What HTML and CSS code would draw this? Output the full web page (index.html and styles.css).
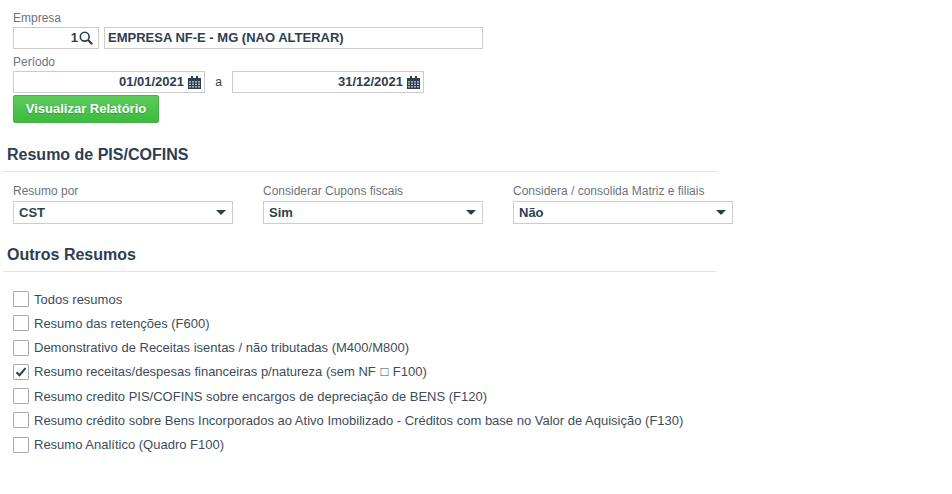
FILE: index.html
```html
<!DOCTYPE html>
<html lang="pt-BR">
<head>
<meta charset="utf-8">
<title>Resumo de PIS/COFINS</title>
<link rel="stylesheet" href="styles.css">
</head>
<body>
<main class="page">
  <div class="filters">
    <label class="label">Empresa</label>
    <div class="row">
      <div class="field code"><span>1</span>
        <svg class="icon search" viewBox="0 0 14 14"><circle cx="5.7" cy="5.7" r="4.4" fill="none" stroke="#2d3e50" stroke-width="1.6"/><path d="M8.8 8.8l4.4 4.4" stroke="#2d3e50" stroke-width="2.2"/></svg>
      </div>
      <div class="field name">EMPRESA NF-E - MG (NAO ALTERAR)</div>
    </div>
    <label class="label period">Período</label>
    <div class="row">
      <div class="field date"><span>01/01/2021</span>
        <svg class="icon" viewBox="0 0 13 13"><path d="M0 2h13v11H0z" fill="#2d3e50"/><path d="M3 0h2v3H3zM8 0h2v3H8z" fill="#2d3e50"/><path d="M1 5h2v1.5H1zM4 5h2v1.5H4zM7 5h2v1.5H7zM10 5h2v1.5h-2zM1 7.5h2V9H1zM4 7.5h2V9H4zM7 7.5h2V9H7zM10 7.5h2V9h-2zM1 10h2v1.5H1zM4 10h2v1.5H4zM7 10h2v1.5H7zM10 10h2v1.5h-2z" fill="#fff" opacity=".6"/></svg>
      </div>
      <span class="sep">a</span>
      <div class="field date"><span>31/12/2021</span>
        <svg class="icon" viewBox="0 0 13 13"><path d="M0 2h13v11H0z" fill="#2d3e50"/><path d="M3 0h2v3H3zM8 0h2v3H8z" fill="#2d3e50"/><path d="M1 5h2v1.5H1zM4 5h2v1.5H4zM7 5h2v1.5H7zM10 5h2v1.5h-2zM1 7.5h2V9H1zM4 7.5h2V9H4zM7 7.5h2V9H7zM10 7.5h2V9h-2zM1 10h2v1.5H1zM4 10h2v1.5H4zM7 10h2v1.5H7zM10 10h2v1.5h-2z" fill="#fff" opacity=".6"/></svg>
      </div>
    </div>
    <button class="btn" type="button">Visualizar Relatório</button>
  </div>

  <h2 class="title first">Resumo de PIS/COFINS</h2>
  <div class="selects">
    <div class="sel-col">
      <label class="label">Resumo por</label>
      <div class="select"><span>CST</span><i class="caret"></i></div>
    </div>
    <div class="sel-col">
      <label class="label">Considerar Cupons fiscais</label>
      <div class="select"><span>Sim</span><i class="caret"></i></div>
    </div>
    <div class="sel-col">
      <label class="label">Considera / consolida Matriz e filiais</label>
      <div class="select"><span>Não</span><i class="caret"></i></div>
    </div>
  </div>

  <h2 class="title second">Outros Resumos</h2>
  <ul class="checks">
    <li><i class="box"></i><span>Todos resumos</span></li>
    <li><i class="box"></i><span>Resumo das retenções (F600)</span></li>
    <li><i class="box"></i><span>Demonstrativo de Receitas isentas / não tributadas (M400/M800)</span></li>
    <li><i class="box"><svg viewBox="0 0 14 14"><path d="M2.5 7.2l3 3 6-7" fill="none" stroke="#2d3e50" stroke-width="2"/></svg></i><span>Resumo receitas/despesas financeiras p/natureza (sem NF <span class="tofu">□</span> F100)</span></li>
    <li><i class="box"></i><span>Resumo credito PIS/COFINS sobre encargos de depreciação de BENS (F120)</span></li>
    <li><i class="box"></i><span>Resumo crédito sobre Bens Incorporados ao Ativo Imobilizado - Créditos com base no Valor de Aquisição (F130)</span></li>
    <li><i class="box"></i><span>Resumo Analítico (Quadro F100)</span></li>
  </ul>
</main>
</body>
</html>
```
FILE: styles.css
```css
* { box-sizing: border-box; }
html, body { margin: 0; padding: 0; background: #fff; }
body {
  width: 952px;
  height: 494px;
  overflow: hidden;
  font-family: "Liberation Sans", Arial, sans-serif;
  font-size: 12px;
  color: #2d3e50;
}
.page { padding: 11px 0 0 0; }
.filters { padding-left: 13px; }
.label {
  display: block;
  height: 16px;
  line-height: 14px;
  font-size: 12px;
  color: #6b7480;
}
.period { margin-top: 6px; }
.row { display: flex; align-items: center; height: 22px; }
.field {
  height: 22px;
  border: 1px solid #ccc;
  font-size: 13px;
  line-height: 20px;
  display: flex;
  align-items: center;
  background: #fff;
}
.code { width: 86px; justify-content: flex-end; padding-right: 5px; gap: 1px; font-weight: 700; margin-right: 5px; }
.name { width: 379px; padding-left: 3px; font-weight: 700; }
.date { width: 192px; justify-content: flex-end; padding-right: 3px; gap: 4px; font-weight: 700; }
.icon { width: 13px; height: 13px; flex: none; }
.search { width: 14px; height: 14px; }
.sep { width: 27px; text-align: center; color: #2d3e50; }
.btn {
  display: block;
  margin-top: 2px;
  width: 146px;
  height: 28px;
  padding: 0 0 2px;
  border: 1px solid #3fb63f;
  border-radius: 2px;
  background: linear-gradient(#5ccb5c, #3dbb3d);
  color: #fff;
  font: 700 13px "Liberation Sans", Arial, sans-serif;
  text-shadow: 0 1px 1px rgba(0, 0, 0, .2);
}
.title {
  margin: 0 235px 0 3px;
  padding: 0 0 7px 4px;
  height: 27px;
  line-height: 19px;
  font-size: 16px;
  font-weight: 700;
  color: #2d3e50;
  border-bottom: 1px solid #e4e4e4;
}
.first { margin-top: 22px; }
.second { margin-top: 21px; }
.selects { display: flex; gap: 30px; padding: 11px 0 0 13px; }
.sel-col { width: 220px; }
.sel-col .label { height: 18px; line-height: 16px; }
.select {
  height: 23px;
  border: 1px solid #ccc;
  padding: 0 6px 0 5px;
  display: flex;
  align-items: center;
  justify-content: space-between;
  font-size: 13px;
  font-weight: 700;
}
.caret {
  width: 0;
  height: 0;
  border-left: 5px solid transparent;
  border-right: 5px solid transparent;
  border-top: 5px solid #2d3e50;
}
.checks { list-style: none; margin: 0; padding: 15px 0 0 13px; }
.checks li {
  display: flex;
  align-items: center;
  height: 24.25px;
  font-size: 13px;
  color: #3d4c5c;
}
.tofu { margin: 0 1px; }
.box {
  width: 16px;
  height: 16px;
  border: 1px solid #aaa;
  border-radius: 1px;
  margin-right: 5px;
  flex: none;
  display: flex;
}
.box svg { width: 14px; height: 14px; }
```
